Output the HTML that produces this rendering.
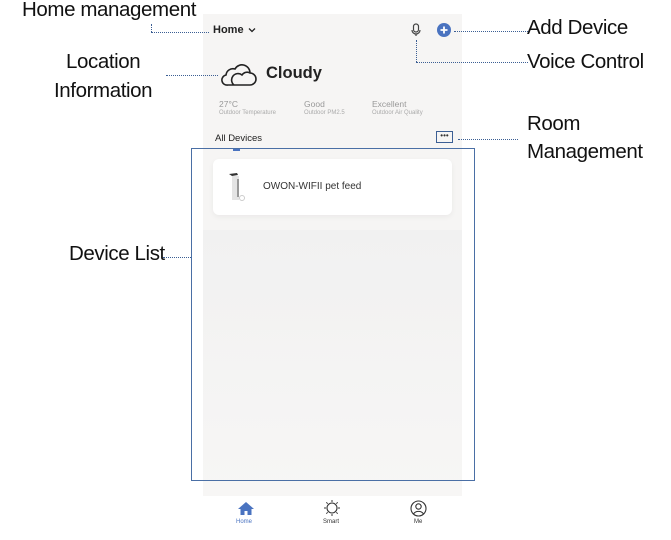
<!DOCTYPE html>
<html><head><meta charset="utf-8"><style>
*{margin:0;padding:0;box-sizing:border-box}
body{width:671px;height:540px;background:#fff;position:relative;overflow:hidden;font-family:"Liberation Sans",sans-serif;color:#222}
.a{position:absolute;white-space:nowrap}
.lbl{font-size:20.5px;color:#111;letter-spacing:-0.4px}
.dot{position:absolute;border-top:1.5px dotted #3c5f94}
.vdot{position:absolute;border-left:1.5px dotted #3c5f94}
.sm{font-size:6px;color:#aaa}
.md{font-size:8.5px;color:#999}
</style></head><body>
<div class="a" style="left:203px;top:14px;width:259px;height:482px;background:#f6f5f4"></div>
<div class="a" style="left:203px;top:230px;width:259px;height:266px;background:linear-gradient(#f1f1f1,#f7f6f5)"></div>

<div class="a lbl" style="left:22px;top:-2px">Home management</div>
<div class="vdot" style="left:151px;top:24px;height:8px"></div>
<div class="dot" style="left:151px;top:32px;width:58px"></div>
<div class="a" style="left:213px;top:24px;font-size:11px;font-weight:bold">Home</div>
<svg class="a" style="left:248px;top:27px" width="8" height="6"><path d="M1 1.5L4 4.5L7 1.5" stroke="#222" stroke-width="1.3" fill="none"/></svg>

<svg class="a" style="left:411px;top:23px" width="10" height="15"><rect x="2.5" y="1" width="5" height="8" rx="2.5" stroke="#444" stroke-width="1.2" fill="none"/><path d="M1 7a4 4 0 0 0 8 0M5 11v2" stroke="#444" stroke-width="1.2" fill="none"/></svg>
<div class="vdot" style="left:416px;top:40px;height:22px"></div>
<div class="dot" style="left:416px;top:62px;width:112px"></div>
<div class="a lbl" style="left:527px;top:50px">Voice Control</div>

<svg class="a" style="left:437px;top:23px" width="14" height="14"><circle cx="7" cy="7" r="7" fill="#4a73c0"/><path d="M7 3.5v7M3.5 7h7" stroke="#fff" stroke-width="1.8"/></svg>
<div class="dot" style="left:454px;top:31px;width:74px"></div>
<div class="a lbl" style="left:527px;top:16px">Add Device</div>

<div class="a lbl" style="left:66px;top:50px">Location</div>
<div class="a lbl" style="left:54px;top:79px">Information</div>
<div class="dot" style="left:166px;top:75px;width:52px"></div>
<svg class="a" style="left:220px;top:60px" width="38" height="28"><path d="M8 25h22a6 6 0 0 0 0-12 8 8 0 0 0-15-4 7 7 0 0 0-9 6 5 5 0 0 0 2 10z M14 25a6 6 0 0 1 8-10 6 6 0 0 1 8-2" stroke="#222" stroke-width="1.6" fill="none"/></svg>
<div class="a" style="left:266px;top:64px;font-size:16.5px;font-weight:bold">Cloudy</div>

<div class="a md" style="left:219px;top:99px">27°C</div>
<div class="a sm" style="left:219px;top:110px">Outdoor Temperature</div>
<div class="a md" style="left:304px;top:99px">Good</div>
<div class="a sm" style="left:304px;top:110px">Outdoor PM2.5</div>
<div class="a md" style="left:372px;top:99px">Excellent</div>
<div class="a sm" style="left:372px;top:110px">Outdoor Air Quality</div>

<div class="a" style="left:215px;top:133px;font-size:9.5px">All Devices</div>
<div class="a" style="left:233px;top:149px;width:7px;height:2px;background:#4a73c0"></div>
<div class="a" style="left:436px;top:131px;width:17px;height:12px;border:1px solid #3c5f94;font-size:8px;line-height:7px;text-align:center;color:#333">•••</div>
<div class="dot" style="left:458px;top:139px;width:60px"></div>
<div class="a lbl" style="left:527px;top:112px">Room</div>
<div class="a lbl" style="left:527px;top:140px">Management</div>

<div class="a" style="left:213px;top:159px;width:239px;height:56px;background:#fff;border-radius:6px;box-shadow:0 2px 6px rgba(0,0,0,.05)"></div>
<svg class="a" style="left:227px;top:171px" width="22" height="34"><path d="M2 3l8-1 1 2-6 1z" fill="#333"/><rect x="5" y="5" width="7" height="24" fill="#e4e4e4"/><rect x="10" y="8" width="2" height="18" fill="#999"/><circle cx="15" cy="27" r="2.5" stroke="#ccc" fill="none"/></svg>
<div class="a" style="left:263px;top:181px;font-size:10px;color:#333">OWON-WIFII pet feed</div>

<div class="a" style="left:191px;top:148px;width:284px;height:333px;border:1.3px solid #4a6fa5"></div>
<div class="a lbl" style="left:69px;top:242px">Device List</div>
<div class="dot" style="left:163px;top:257px;width:28px"></div>

<svg class="a" style="left:237px;top:501px" width="18" height="15"><path d="M9 1L1 8h2.5v6h4v-4h3v4h4V8H17z" fill="#4a73c0"/></svg>
<div class="a" style="left:236px;top:519px;font-size:6px;color:#4a73c0">Home</div>
<svg class="a" style="left:323px;top:499px" width="18" height="18"><circle cx="9" cy="9" r="5" stroke="#333" stroke-width="1.1" fill="none"/><path d="M9 1v2M9 15v2M1 9h2M15 9h2M3.3 3.3l1.4 1.4M13.3 13.3l1.4 1.4M3.3 14.7l1.4-1.4M13.3 4.7l1.4-1.4" stroke="#333" stroke-width="1"/></svg>
<div class="a" style="left:323px;top:519px;font-size:6px;color:#333">Smart</div>
<svg class="a" style="left:410px;top:500px" width="17" height="17"><circle cx="8.5" cy="8.5" r="7.5" stroke="#333" stroke-width="1.1" fill="none"/><circle cx="8.5" cy="6.5" r="2.7" stroke="#333" stroke-width="1.1" fill="none"/><path d="M3.5 14a5.5 4.5 0 0 1 10 0" stroke="#333" stroke-width="1.1" fill="none"/></svg>
<div class="a" style="left:414px;top:519px;font-size:6px;color:#333">Me</div>
</body></html>
